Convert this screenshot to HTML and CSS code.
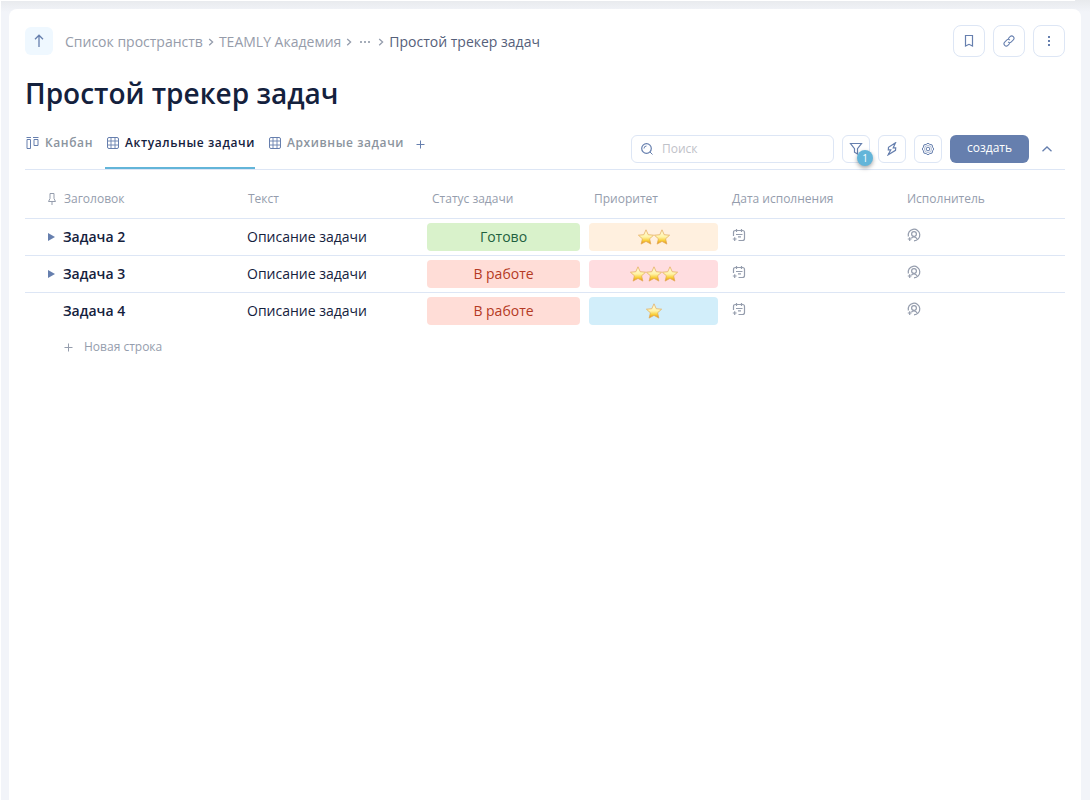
FILE: index.html
```html
<!DOCTYPE html>
<html lang="ru">
<head>
<meta charset="utf-8">
<meta name="viewport" content="width=device-width, initial-scale=1">
<title>Простой трекер задач</title>
<link rel="stylesheet" href="styles.css">
</head>
<body>
<svg class="sprite" aria-hidden="true">
  <defs>
    <linearGradient id="gold" x1="0" y1="0" x2="0" y2="1">
      <stop offset="0" stop-color="#fffbe0"/>
      <stop offset="0.5" stop-color="#fff3a8"/>
      <stop offset="0.75" stop-color="#f9cf3a"/>
      <stop offset="1" stop-color="#e08a1c"/>
    </linearGradient>
    <symbol id="star" viewBox="0 0 16 16">
      <path d="M8 .8 10.2 5.7 15.6 6.2 11.6 9.8 12.9 15.1 8 12.4 3.1 15.1 4.4 9.8 .4 6.2 5.8 5.7Z" fill="url(#gold)" stroke="#e3a955" stroke-width=".7" stroke-linejoin="round"/>
    </symbol>
    <symbol id="grid" viewBox="0 0 12 12">
      <rect x=".5" y=".5" width="11" height="11" rx="1.5"/>
      <path d="M4 .5v11M8 .5v11M.5 4h11M.5 8h11" stroke-width=".9"/>
    </symbol>
    <symbol id="sep" viewBox="0 0 6 10">
      <path d="M1.2 2 4.6 5.1 1.2 8.2" stroke-width="1.300"/>
    </symbol>
    <symbol id="date" viewBox="0 0 14 14">
      <path d="M1.500 8V4.500Q1.500 2.500 3.500 2.500H10.500Q12.500 2.500 12.500 4.500V10.500Q12.500 12.500 10.500 12.500H6.500M4.500 1v3M9.500 1v3M4 6.500h6.500M6 8.800h3M.8 11h3.800M2.700 9.300v3.600" stroke-width="1.200"/>
    </symbol>
    <symbol id="person" viewBox="0 0 14 14">
      <path d="M1.400 8.500A5.800 5.800 0 1 1 7 12.800M4.500 10.200Q5 8.800 7 8.800T10.400 11.500" stroke-width="1.200"/>
      <circle cx="7" cy="6" r="2.400" stroke-width="1.200"/>
      <path d="M.8 11h3.800M2.700 9.300v3.600" stroke-width="1.200"/>
    </symbol>
  </defs>
</svg>
<div class="edge"></div>
<main class="page">
  <header class="topbar">
    <button class="up" type="button" aria-label="Вверх"><svg class="icon" width="14" height="14" viewBox="0 0 14 14"><path d="M7 13V1.500M3 5.200 7 1.200 11 5.200" stroke-width="1.300"/></svg></button>
    <nav class="crumbs" aria-label="Навигация">
      <a href="#">Список пространств</a>
      <svg class="icon grey" width="6" height="10"><use href="#sep"/></svg>
      <a href="#">TEAMLY Академия</a>
      <svg class="icon grey" width="6" height="10"><use href="#sep"/></svg>
      <button class="dots" type="button" aria-label="Показать путь"><svg width="10" height="4" viewBox="0 0 10 4"><path d="M0 1h2v2H0zM4 1h2v2H4zM8 1h2v2H8z" fill="#a5adb9"/></svg></button>
      <svg class="icon grey" width="6" height="10"><use href="#sep"/></svg>
      <a class="current" href="#" aria-current="page">Простой трекер задач</a>
    </nav>
    <div class="actions">
      <button class="square large" type="button" aria-label="В закладки"><svg class="icon" width="14" height="14" viewBox="0 0 14 14"><path d="M3.500 1.500H10.500V12L7 10.300 3.500 12Z" stroke-width="1.200"/></svg></button>
      <button class="square large" type="button" aria-label="Ссылка"><svg class="icon" width="14" height="14" viewBox="0 0 14 14"><g transform="rotate(-45 7 7)"><path d="M5.800 9.300H3.200A2.300 2.300 0 0 1 3.200 4.700H6A2.300 2.300 0 0 1 8.300 7M8.200 4.700H10.800A2.300 2.300 0 0 1 10.800 9.300H8A2.300 2.300 0 0 1 5.700 7"/></g></svg></button>
      <button class="square large" type="button" aria-label="Меню"><svg width="14" height="14" viewBox="0 0 14 14"><path d="M6 2h2v2H6zM6 6h2v2H6zM6 10h2v2H6z" fill="#667fae"/></svg></button>
    </div>
  </header>
  <h1 class="title">Простой трекер задач</h1>
  <div class="toolbar">
    <div class="tabs">
      <button class="tab" type="button"><svg class="icon" width="13" height="12" viewBox="0 0 13 12"><path d="M.5 .5H5M7 .5H12.500M1 2.500H4.500V11.500H1ZM8 2.500H12V8.500H8Z"/></svg>Канбан</button>
      <button class="tab active" type="button"><svg class="icon" width="12" height="12"><use href="#grid"/></svg>Актуальные задачи</button>
      <button class="tab" type="button"><svg class="icon" width="12" height="12"><use href="#grid"/></svg>Архивные задачи</button>
      <button class="tab-add" type="button" aria-label="Добавить вид"><svg class="icon" width="9" height="9" viewBox="0 0 9 9"><path d="M4.500 .5v8M.5 4.500h8"/></svg></button>
    </div>
    <div class="tools">
      <label class="search"><svg class="icon" width="12" height="12" viewBox="0 0 12 12"><circle cx="5.500" cy="5.500" r="4.800" stroke-width="1.200"/><path d="M9 9 11.500 11.500M3 5.500Q3 3 5.500 3"/></svg><input type="search" placeholder="Поиск" aria-label="Поиск"></label>
      <button class="square filter" type="button" aria-label="Фильтр, 1"><svg class="icon" width="14" height="14" viewBox="0 0 14 14"><path d="M1.500 1.500H12.500L8.500 6.700V12L5.500 10.200V6.700Z" stroke-width="1.200"/></svg><span class="badge">1</span></button>
      <button class="square" type="button" aria-label="Автоматизации"><svg class="icon" width="14" height="14" viewBox="0 0 14 14"><path d="M10.500 .8 3.500 5.300 3.300 7.800H5.800L3.200 12.800 10.500 8.300 10.700 5.800H8.200Z" stroke-width="1.200"/></svg></button>
      <button class="square" type="button" aria-label="Настройки"><svg class="icon" width="14" height="14" viewBox="0 0 14 14"><path d="M7 1.200 8.800 2.400 11.100 2.900 11.600 5.200 12.800 7 11.600 8.800 11.100 11.100 8.800 11.600 7 12.800 5.200 11.600 2.900 11.100 2.400 8.800 1.200 7 2.400 5.200 2.900 2.900 5.200 2.400Z" stroke-linejoin="round"/><circle cx="7" cy="7" r="3.600" stroke-width=".5"/><circle cx="7" cy="7" r="1.800"/></svg></button>
      <button class="create" type="button">создать</button>
      <button class="collapse" type="button" aria-label="Свернуть"><svg class="icon" width="12" height="8" viewBox="0 0 12 8"><path d="M1.500 6.200 6 2 10.500 6.200" stroke-width="1.300"/></svg></button>
    </div>
  </div>
  <table class="tasks">
    <colgroup><col class="c-name"><col class="c-text"><col class="c-status"><col class="c-priority"><col class="c-date"><col></colgroup>
    <thead>
      <tr>
        <th scope="col"><span class="name"><svg class="icon grey" width="8" height="12" viewBox="0 0 8 12"><path d="M2 .5H6V5.500L7.500 8.500H.5L2 5.500ZM4 8.500V12"/></svg>Заголовок</span></th>
        <th scope="col">Текст</th>
        <th scope="col">Статус задачи</th>
        <th scope="col">Приоритет</th>
        <th scope="col">Дата исполнения</th>
        <th scope="col">Исполнитель</th>
      </tr>
    </thead>
    <tbody>
      <tr>
        <td><span class="name"><button class="expand" type="button" aria-label="Развернуть"></button>Задача 2</span></td>
        <td>Описание задачи</td>
        <td class="tag-cell"><span class="tag done">Готово</span></td>
        <td class="tag-cell"><span class="tag medium"><svg width="16" height="16"><use href="#star"/></svg><svg width="16" height="16"><use href="#star"/></svg></span></td>
        <td class="icon-cell"><svg class="icon grey" width="14" height="14"><use href="#date"/></svg></td>
        <td class="icon-cell"><svg class="icon grey" width="14" height="14"><use href="#person"/></svg></td>
      </tr>
      <tr>
        <td><span class="name"><button class="expand" type="button" aria-label="Развернуть"></button>Задача 3</span></td>
        <td>Описание задачи</td>
        <td class="tag-cell"><span class="tag progress">В работе</span></td>
        <td class="tag-cell"><span class="tag high"><svg width="16" height="16"><use href="#star"/></svg><svg width="16" height="16"><use href="#star"/></svg><svg width="16" height="16"><use href="#star"/></svg></span></td>
        <td class="icon-cell"><svg class="icon grey" width="14" height="14"><use href="#date"/></svg></td>
        <td class="icon-cell"><svg class="icon grey" width="14" height="14"><use href="#person"/></svg></td>
      </tr>
      <tr>
        <td><span class="name leaf">Задача 4</span></td>
        <td>Описание задачи</td>
        <td class="tag-cell"><span class="tag progress">В работе</span></td>
        <td class="tag-cell"><span class="tag low"><svg width="16" height="16"><use href="#star"/></svg></span></td>
        <td class="icon-cell"><svg class="icon grey" width="14" height="14"><use href="#date"/></svg></td>
        <td class="icon-cell"><svg class="icon grey" width="14" height="14"><use href="#person"/></svg></td>
      </tr>
    </tbody>
  </table>
  <button class="new-row" type="button"><svg class="icon grey" width="9" height="9" viewBox="0 0 9 9"><path d="M4.500 .5v8M.5 4.500h8"/></svg>Новая строка</button>
</main>
</body>
</html>
```
FILE: styles.css
```css
* {
  box-sizing: border-box;
}

body {
  display: flex;
  flex-direction: column;
  min-height: 100vh;
  margin: 0;
  padding: 0 9px 0 8px;
  border-left: 1px solid #fff;
  background: linear-gradient(#e8eaed, #f2f4f9 12px);
  background-repeat: no-repeat;
  background-color: #f2f4f9;
  font-family: "Open Sans", "Noto Sans", sans-serif;
  font-size: 14px;
  line-height: 20px;
  color: #14213d;
}

button,
input {
  padding: 0;
  border: 0;
  background: none;
  font: inherit;
  color: inherit;
}

a {
  color: inherit;
  text-decoration: none;
}

svg {
  flex: none;
}

.sprite {
  position: absolute;
  width: 0;
  height: 0;
}

.icon {
  display: block;
  fill: none;
  stroke: #667fae;
  stroke-width: 1;
}

.icon.grey {
  stroke: #959dad;
}

.edge {
  height: 1px;
  margin: 0 6px 0 -8px;
  background: #fff;
}

.page {
  flex: 1;
  margin-top: 8px;
  padding: 16px;
  border-radius: 8px 8px 0 0;
  background: #fff;
}

.topbar {
  display: flex;
  align-items: center;
}

.up {
  display: grid;
  place-items: center;
  width: 28px;
  height: 28px;
  border-radius: 6px;
  background: #eff8ff;
}

.crumbs {
  display: flex;
  align-items: center;
  gap: 5px;
  margin-left: 12px;
  padding-top: 2px;
  color: #969caa;
}

.crumbs .current {
  color: #55607a;
}

.dots {
  display: grid;
  place-items: center;
  width: 16px;
  height: 16px;
}

.actions {
  display: flex;
  gap: 8px;
  margin-left: auto;
}

.square {
  display: grid;
  place-items: center;
  width: 28px;
  height: 28px;
  border: 1px solid #dde6f5;
  border-radius: 6px;
  background: #fff;
}

.square.large {
  width: 32px;
  height: 32px;
  border-radius: 8px;
}

.title {
  margin: 16px 0;
  font-size: 28px;
  font-weight: 600;
  line-height: 40px;
}

.toolbar {
  display: flex;
  justify-content: space-between;
  height: 41px;
  border-bottom: 1px solid #dde6f5;
}

.tabs {
  display: flex;
  gap: 12px;
}

.tab {
  display: flex;
  gap: 6px;
  align-items: center;
  padding: 0 0 11px 2px;
  border-bottom: 2px solid transparent;
  font-size: 12px;
  font-weight: 600;
  letter-spacing: 0.05em;
  white-space: nowrap;
  color: #8b949e;
}

.tab:first-child {
  padding-left: 1px;
}

.tab.active {
  border-color: #63b5d9;
  color: #14213d;
}

.tab-add {
  display: grid;
  place-items: center;
  padding: 0 0 9px;
}

.tools {
  display: flex;
  gap: 8px;
  padding-top: 6px;
}

.search {
  display: flex;
  align-items: center;
  gap: 9px;
  width: 203px;
  height: 28px;
  padding: 0 9px;
  border: 1px solid #dde6f5;
  border-radius: 6px;
}

.search input {
  flex: 1;
  min-width: 0;
  outline: 0;
  font-size: 12px;
}

.search input::placeholder {
  color: #bfc2c9;
}

.filter {
  position: relative;
}

.badge {
  position: absolute;
  top: 14px;
  left: 14px;
  width: 16px;
  height: 16px;
  border-radius: 50%;
  background: #63b5d9;
  box-shadow: 0 2px 4px rgba(0, 0, 0, 0.35);
  font-size: 10px;
  line-height: 16px;
  text-align: center;
  color: #fff;
}

.create {
  width: 79px;
  height: 28px;
  padding-bottom: 2px;
  border-radius: 6px;
  background: #667fae;
  font-size: 12px;
  color: #fff;
}

.collapse {
  display: grid;
  place-items: center;
  width: 20px;
  height: 28px;
  margin-right: 8px;
}

.tasks {
  width: 100%;
  border-collapse: separate;
  border-spacing: 0;
  table-layout: fixed;
}

.c-name {
  width: 214px;
}

.c-text {
  width: 184px;
}

.c-status {
  width: 162px;
}

.c-priority {
  width: 138px;
}

.c-date {
  width: 175px;
}

.tasks th {
  height: 49px;
  padding: 10px 9px 0;
  border-bottom: 1px solid #dde6f5;
  font-size: 12px;
  font-weight: 400;
  text-align: left;
  white-space: nowrap;
  color: #959dad;
}

.tasks td {
  height: 37px;
  padding: 0 8px;
  border-bottom: 1px solid #dde6f5;
}

.tasks tbody tr:last-child td {
  height: 36px;
  border-bottom: 0;
}

.name {
  display: flex;
  align-items: center;
  gap: 8px;
}

.tasks th:first-child,
.tasks td:first-child {
  padding-left: 23px;
}

.tasks td:first-child {
  font-weight: 600;
}

.leaf {
  padding-left: 15px;
}

.expand {
  width: 7px;
  height: 8px;
  background: #667fae;
  clip-path: polygon(0 0, 100% 50%, 0 100%);
}

.tasks .tag-cell {
  padding: 0 5px 0 4px;
}

.tag {
  display: flex;
  align-items: center;
  justify-content: center;
  height: 28px;
  border-radius: 4px;
}

.done {
  background: #d9f2cb;
  color: #1f6140;
}

.progress {
  background: #ffddd7;
  color: #b53a24;
}

.medium {
  background: #fff0df;
}

.high {
  background: #ffdde0;
}

.low {
  background: #d2eefa;
}

.tasks .icon-cell {
  padding: 0 9px 4px;
}

.new-row {
  display: flex;
  align-items: center;
  gap: 11px;
  height: 36px;
  padding-left: 39px;
  font-size: 12px;
  color: #959dad;
}
```
